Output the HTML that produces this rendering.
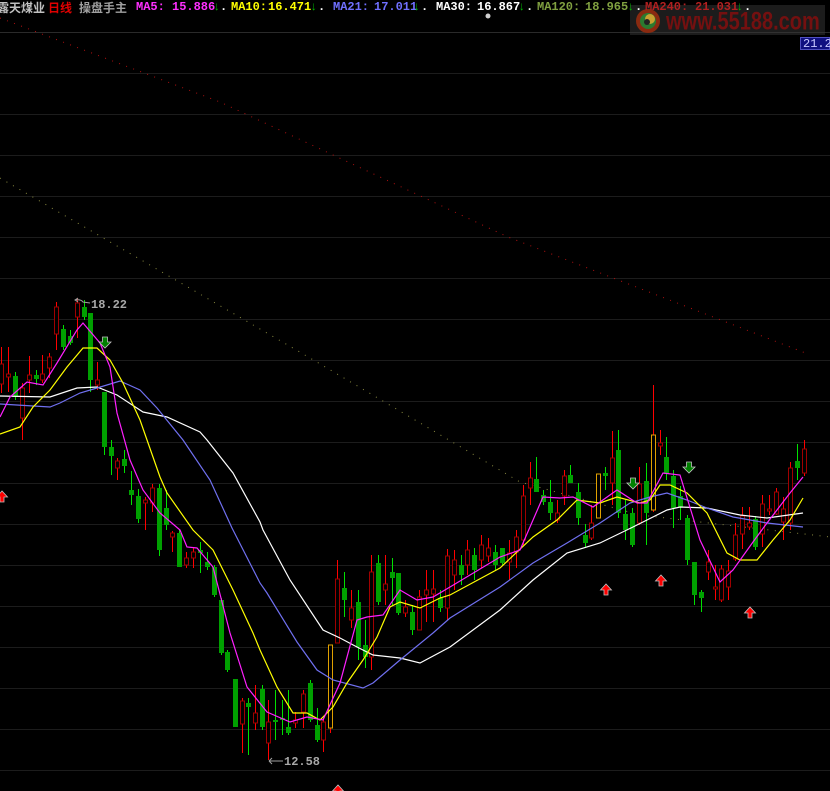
<!DOCTYPE html>
<html><head><meta charset="utf-8">
<style>
html,body{margin:0;padding:0;background:#000;width:830px;height:791px;overflow:hidden;position:relative}
.t{position:absolute;top:0;white-space:nowrap;font:bold 12px "Liberation Mono",monospace;line-height:15px}
.cn{font:bold 12px "Noto Sans CJK SC","WenQuanYi Zen Hei",sans-serif;line-height:15px}
#wm{position:absolute;left:630px;top:5px;width:195px;height:30px;background:rgba(55,55,55,0.5)}
#wm span{position:absolute;left:36px;top:3px;font:bold 20px "Liberation Sans",sans-serif;color:#741010;transform:scaleY(1.25);transform-origin:0 0}
#lbl{position:absolute;left:800px;top:37px;width:30px;height:13px;background:#101080;border:1px solid #5050c0;color:#c8c8ff;font:12px "Liberation Mono",monospace;line-height:12px;padding-left:2px;box-sizing:border-box}
svg{position:absolute;left:0;top:0}
</style></head><body>
<svg width="830" height="791" viewBox="0 0 830 791">
<line x1="0" y1="32.5" x2="830" y2="32.5" stroke="#2a2a2a"/>
<g stroke="#1c1c1c"><line x1="0" y1="73.5" x2="830" y2="73.5"/><line x1="0" y1="114.5" x2="830" y2="114.5"/><line x1="0" y1="155.5" x2="830" y2="155.5"/><line x1="0" y1="196.5" x2="830" y2="196.5"/><line x1="0" y1="237.5" x2="830" y2="237.5"/><line x1="0" y1="278.5" x2="830" y2="278.5"/><line x1="0" y1="319.5" x2="830" y2="319.5"/><line x1="0" y1="360.5" x2="830" y2="360.5"/><line x1="0" y1="401.5" x2="830" y2="401.5"/><line x1="0" y1="442.5" x2="830" y2="442.5"/><line x1="0" y1="483.5" x2="830" y2="483.5"/><line x1="0" y1="524.5" x2="830" y2="524.5"/><line x1="0" y1="565.5" x2="830" y2="565.5"/><line x1="0" y1="606.5" x2="830" y2="606.5"/><line x1="0" y1="647.5" x2="830" y2="647.5"/><line x1="0" y1="688.5" x2="830" y2="688.5"/><line x1="0" y1="729.5" x2="830" y2="729.5"/><line x1="0" y1="770.5" x2="830" y2="770.5"/></g>
<polyline fill="none" stroke="#b01010" stroke-width="1" stroke-dasharray="1 6.5" points="0,18 220,102 508,237 808,354"/>
<polyline fill="none" stroke="#8a8a40" stroke-width="1" stroke-dasharray="1 6.5" points="0,178 310,358 520,482 640,515 830,537"/>
<path fill="none" stroke="#ff0000" d="M1.5 347V393M8.5 347V392M22.5 383V440M29.5 356V393M42.5 355V383M49.5 353V378M56.5 302V350M77.5 298V338M97.5 362V390M117.5 458V480M145.5 497V530M152.5 484V512M172.5 531V552M186.5 552V568M193.5 547V568M242.5 698V753M255.5 685V730M268.5 700V760M295.5 712V728M303.5 690V728M323.5 718V752M330.5 645V733M337.5 560V643M351.5 590V628M371.5 555V670M385.5 555V605M405.5 600V617M419.5 590V630M426.5 570V622M433.5 570V622M447.5 549V620M454.5 550V590M467.5 540V575M481.5 535V568M488.5 538V562M509.5 540V580M516.5 530V568M523.5 485V545M530.5 462V505M557.5 500V523M564.5 470V505M591.5 505V540M598.5 474V518M612.5 431V505M639.5 467V525M653.5 385V512M660.5 430V455M708.5 550V580M715.5 565V600M721.5 565V602M728.5 560V600M735.5 523V561M742.5 507V549M749.5 507V530M762.5 495V547M769.5 495V515M776.5 488V515M783.5 497V540M790.5 462V530M804.5 440V476"/>
<path fill="#000" stroke="#a00000" d="M-0.5 364h4V384h-4zM6.5 374h4V377h-4zM20.5 388h4V418h-4zM27.5 375h4V380h-4zM40.5 374h4V380h-4zM47.5 357h4V368h-4zM54.5 307h4V334h-4zM75.5 303h4V317h-4zM95.5 380h4V385h-4zM115.5 461h4V468h-4zM143.5 500h4V503h-4zM150.5 488h4V503h-4zM170.5 533h4V537h-4zM184.5 558h4V565h-4zM191.5 552h4V558h-4zM240.5 701h4V724h-4zM253.5 713h4V723h-4zM266.5 722h4V743h-4zM293.5 720h4V723h-4zM301.5 694h4V712h-4zM321.5 722h4V740h-4zM335.5 579h4V643h-4zM349.5 608h4V620h-4zM369.5 572h4V657h-4zM383.5 584h4V590h-4zM403.5 607h4V613h-4zM417.5 597h4V630h-4zM424.5 590h4V595h-4zM431.5 589h4V594h-4zM445.5 556h4V608h-4zM452.5 560h4V575h-4zM465.5 550h4V565h-4zM479.5 545h4V560h-4zM486.5 548h4V556h-4zM507.5 553h4V562h-4zM514.5 537h4V552h-4zM521.5 496h4V540h-4zM528.5 478h4V488h-4zM555.5 513h4V520h-4zM562.5 476h4V496h-4zM589.5 523h4V538h-4zM610.5 458h4V483h-4zM637.5 484h4V523h-4zM658.5 443h4V446h-4zM706.5 562h4V572h-4zM713.5 587h4V589h-4zM719.5 569h4V600h-4zM726.5 571h4V587h-4zM733.5 535h4V559h-4zM740.5 516h4V534h-4zM747.5 523h4V527h-4zM760.5 504h4V534h-4zM767.5 509h4V511h-4zM774.5 492h4V514h-4zM781.5 509h4V522h-4zM788.5 468h4V523h-4zM802.5 449h4V473h-4z"/>
<path fill="#000" stroke="#e0a000" d="M328.5 645h4V728h-4zM596.5 474h4V518h-4zM651.5 435h4V510h-4z"/>
<path fill="none" stroke="#00e000" d="M15.5 372V400M36.5 370V385M63.5 325V350M70.5 330V345M84.5 300V320M90.5 313V392M104.5 392V455M111.5 440V475M124.5 450V473M131.5 471V505M138.5 489V523M159.5 484V556M166.5 490V530M179.5 530V567M200.5 542V573M207.5 552V570M214.5 565V597M221.5 598V655M227.5 650V672M235.5 679V727M248.5 698V755M262.5 685V730M275.5 690V740M282.5 700V735M288.5 690V735M310.5 680V722M317.5 708V742M344.5 572V617M358.5 590V660M365.5 620V668M378.5 555V605M392.5 558V605M398.5 573V615M412.5 605V635M440.5 590V612M461.5 555V585M474.5 548V580M495.5 545V570M502.5 548V565M536.5 457V492M543.5 490V505M550.5 480V520M570.5 465V483M578.5 483V525M585.5 524V547M605.5 467V490M618.5 430V518M625.5 500V540M632.5 508V547M646.5 463V545M666.5 437V480M673.5 470V528M680.5 486V520M687.5 515V565M694.5 562V605M701.5 590V612M755.5 516V550M797.5 444V480"/>
<path fill="#00a000" d="M13 376h5V397h-5zM34 375h5V379h-5zM61 329h5V347h-5zM68 336h5V343h-5zM82 307h5V317h-5zM88 313h5V380h-5zM102 392h5V447h-5zM109 447h5V456h-5zM122 459h5V466h-5zM129 490h5V495h-5zM136 496h5V519h-5zM157 488h5V550h-5zM164 508h5V525h-5zM177 533h5V567h-5zM198 550h5V553h-5zM205 562h5V567h-5zM212 567h5V595h-5zM219 600h5V653h-5zM225 652h5V670h-5zM233 679h5V727h-5zM246 703h5V707h-5zM260 689h5V727h-5zM273 720h5V722h-5zM280 718h5V720h-5zM286 727h5V733h-5zM308 683h5V720h-5zM315 725h5V740h-5zM342 588h5V600h-5zM356 602h5V647h-5zM363 645h5V657h-5zM376 563h5V602h-5zM390 572h5V578h-5zM396 573h5V613h-5zM410 612h5V630h-5zM438 598h5V608h-5zM459 565h5V575h-5zM472 555h5V570h-5zM493 552h5V565h-5zM500 548h5V563h-5zM534 479h5V492h-5zM541 495h5V502h-5zM548 502h5V513h-5zM568 475h5V483h-5zM576 492h5V518h-5zM583 535h5V543h-5zM603 473h5V476h-5zM616 450h5V513h-5zM623 514h5V530h-5zM630 513h5V545h-5zM644 481h5V513h-5zM664 457h5V474h-5zM671 476h5V508h-5zM678 496h5V507h-5zM685 518h5V560h-5zM692 562h5V595h-5zM699 592h5V598h-5zM753 519h5V547h-5zM795 461h5V468h-5z"/>
<g fill="none" stroke-width="1.2">
<polyline stroke="#ffffff" points="0,396 50,397 77,388 97,387 117,395 143,412 167,417 200,432 207,440 233,473 260,522 263,530 290,580 323,630 340,638 357,647 373,655 400,658 420,663 450,647 500,610 533,580 567,553 600,543 633,527 667,510 680,507 707,508 740,515 767,518 803,513"/>
<polyline stroke="#7070f0" points="0,404 50,407 60,403 80,393 97,388 120,381 140,390 157,408 183,440 210,480 232,528 260,583 267,593 297,642 317,670 333,680 363,688 373,683 400,660 433,633 450,618 500,587 533,563 567,543 600,523 630,503 650,497 667,493 687,500 707,508 733,517 767,523 803,527"/>
<polyline stroke="#ffff00" points="0,434 20,427 33,407 50,390 67,367 83,348 97,348 110,360 123,383 140,420 160,477 167,493 193,530 213,550 233,590 253,633 260,650 277,687 293,713 307,713 320,720 333,707 347,683 363,660 377,637 390,607 400,602 420,608 440,598 450,595 500,568 533,537 557,520 577,500 600,503 617,497 640,503 650,500 660,485 670,485 687,493 707,513 727,553 740,560 757,560 773,540 790,520 803,498"/>
<polyline stroke="#ff20ff" points="0,417 10,397 27,382 43,385 57,363 77,330 83,323 100,343 110,367 117,413 130,460 143,490 160,513 180,530 187,547 197,548 213,567 230,633 247,687 267,712 290,722 307,717 323,720 340,683 357,620 367,617 383,615 400,590 417,600 433,597 450,587 500,557 520,550 543,497 560,498 573,497 593,507 617,490 637,503 647,503 663,473 680,475 700,540 720,582 733,570 753,542 767,523 790,493 803,477"/>
</g>
<g fill="#008000" stroke="#c0c0c0" stroke-width="0.8">
<path d="M102.5 337h5v5h3.5l-6 6l-6-6h3.5z"/><path d="M630.5 478h5v5h3.5l-6 6l-6-6h3.5z"/><path d="M686.5 462h5v5h3.5l-6 6l-6-6h3.5z"/>
</g>
<g fill="#ff0000" stroke="#c0c0c0" stroke-width="0.8">
<path d="M0 502v-5h-3.5l5.5-6l5.5 6h-3.5v5z"/><path d="M604 595v-5h-3.5l5.5-6l5.5 6h-3.5v5z"/><path d="M659 586v-5h-3.5l5.5-6l5.5 6h-3.5v5z"/><path d="M748 618v-5h-3.5l5.5-6l5.5 6h-3.5v5z"/><path d="M336 796v-5h-3.5l5.5-6l5.5 6h-3.5v5z"/>
</g>
<circle cx="488" cy="16" r="2.5" fill="#d0d0d0"/>
<path d="M78 298l-3 2 3 2M75 300q6-1 8 2l7 1" stroke="#a0a0a0" fill="none"/>
<text x="91" y="308" fill="#a8a8a8" font-family="Liberation Mono,monospace" font-size="12" font-weight="bold">18.22</text>
<path d="M269 761h14M269 761l3-3M269 761l3 3" stroke="#a0a0a0" fill="none"/>
<text x="284" y="765" fill="#a8a8a8" font-family="Liberation Mono,monospace" font-size="12" font-weight="bold">12.58</text>
</svg>
<div id="wm"><svg width="36" height="30"><circle cx="18" cy="16" r="12" fill="#8a2a10"/><circle cx="18" cy="16" r="8" fill="#2a7a30"/><circle cx="20" cy="14" r="5" fill="#c8a030"/><circle cx="17" cy="17" r="3" fill="#222"/></svg><span>www.55188.com</span></div>
<span class="t cn" style="left:-3px;color:#c0c0c0">露天煤业</span>
<span class="t cn" style="left:48px;color:#e00000">日线</span>
<span class="t cn" style="left:79px;color:#a0a0a0">操盘手主</span>
<span class="t" style="left:136px;color:#ff30ff">MA5:</span><span class="t" style="left:172px;color:#ff30ff">15.886</span><span class="t" style="left:213px;color:#00b000">↓</span><span class="t" style="left:220px;color:#fff">.</span>
<span class="t" style="left:231px;color:#ffff00">MA10:</span><span class="t" style="left:268px;color:#ffff00">16.471</span><span class="t" style="left:310px;color:#00b000">↓</span><span class="t" style="left:318px;color:#fff">.</span>
<span class="t" style="left:333px;color:#7070ff">MA21:</span><span class="t" style="left:374px;color:#7070ff">17.011</span><span class="t" style="left:413px;color:#00b000">↓</span><span class="t" style="left:421px;color:#fff">.</span>
<span class="t" style="left:436px;color:#ffffff">MA30:</span><span class="t" style="left:477px;color:#ffffff">16.867</span><span class="t" style="left:518px;color:#00b000">↓</span><span class="t" style="left:526px;color:#fff">.</span>
<span class="t" style="left:537px;color:#80a040">MA120:</span><span class="t" style="left:585px;color:#80a040">18.965</span><span class="t" style="left:627px;color:#00b000">↓</span><span class="t" style="left:635px;color:#fff">.</span>
<span class="t" style="left:645px;color:#b02020">MA240:</span><span class="t" style="left:695px;color:#b02020">21.031</span><span class="t" style="left:736px;color:#00b000">↓</span><span class="t" style="left:744px;color:#fff">.</span>
<div id="lbl">21.2</div>
</body></html>
